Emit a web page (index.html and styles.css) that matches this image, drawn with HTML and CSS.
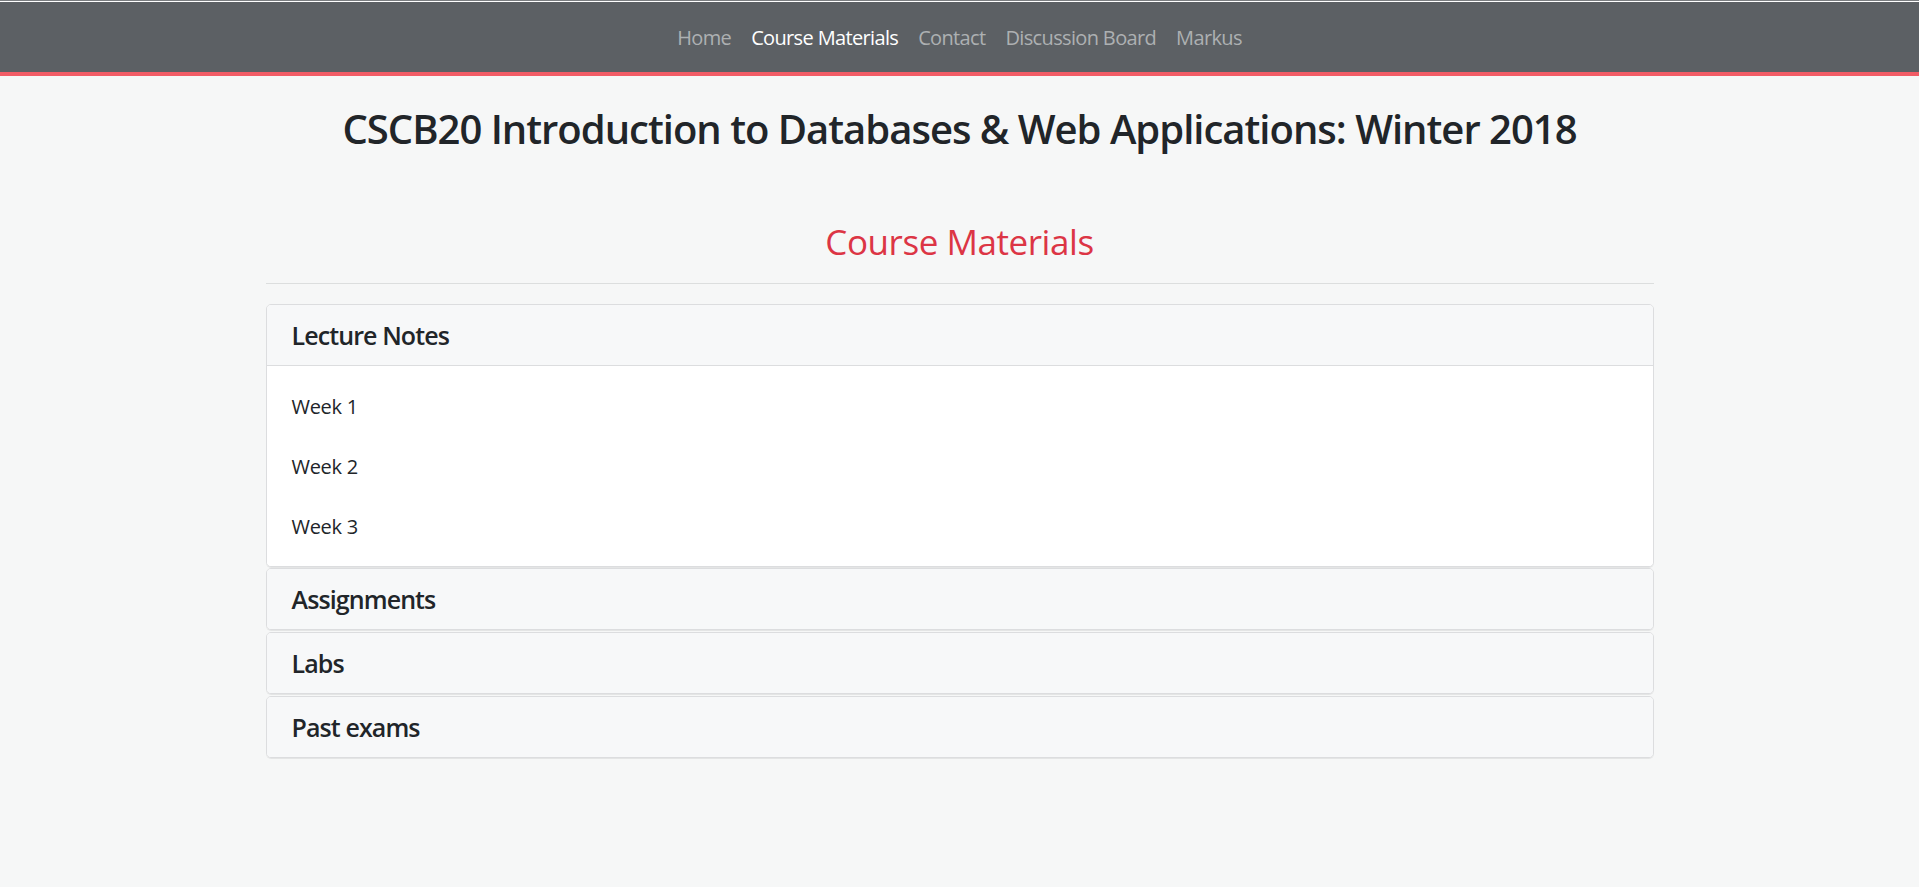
FILE: index.html
```html
<!DOCTYPE html>
<html lang="en">
<head>
<meta charset="utf-8">
<title>CSCB20 - Course Materials</title>
<link rel="stylesheet" href="styles.css">
</head>
<body>
<div class="topline"></div>
<nav class="navbar">
  <ul class="nav">
    <li><a class="nav-link" href="#">Home</a></li>
    <li><a class="nav-link active" href="#">Course Materials</a></li>
    <li><a class="nav-link" href="#">Contact</a></li>
    <li><a class="nav-link" href="#">Discussion Board</a></li>
    <li><a class="nav-link" href="#">Markus</a></li>
  </ul>
</nav>
<h1 class="site-title">CSCB20 Introduction to Databases &amp; Web Applications: Winter 2018</h1>
<main class="container">
  <h2 class="page-title">Course Materials</h2>
  <hr class="divider">
  <div class="card card-open">
    <div class="card-header open">Lecture Notes</div>
    <ul class="card-body">
      <li class="item">Week 1</li>
      <li class="item">Week 2</li>
      <li class="item">Week 3</li>
    </ul>
  </div>
  <div class="card">
    <div class="card-header">Assignments</div>
  </div>
  <div class="card">
    <div class="card-header">Labs</div>
  </div>
  <div class="card">
    <div class="card-header">Past exams</div>
  </div>
</main>
</body>
</html>
```
FILE: styles.css
```css
* { box-sizing: border-box; }
body {
  margin: 0;
  background: #f6f7f7;
  font-family: "Open Sans", "Noto Sans", sans-serif;
  color: #212529;
}
.topline {
  height: 2px;
  background: linear-gradient(#7a7d80 50%, #ffffff 50%);
}
.navbar {
  background: #5c6064;
  border-bottom: 4px solid #f25c66;
}
.nav {
  list-style: none;
  margin: 0;
  padding: 2px 0 0;
  display: flex;
  justify-content: center;
  height: 70px;
  align-items: center;
}
.nav-link {
  display: block;
  padding: 0 10px;
  font-size: 20px;
  line-height: 30px;
  letter-spacing: -0.65px;
  color: #adb0b2;
  text-decoration: none;
}
.nav-link.active { color: #ffffff; }
.site-title {
  margin: 29px 0 0;
  text-align: center;
  font-size: 40px;
  line-height: 48px;
  font-weight: 600;
  letter-spacing: -1px;
}
.container {
  width: 1388px;
  margin: 0 auto;
}
.page-title {
  margin: 68px 0 0;
  text-align: center;
  color: #dc3545;
  font-size: 35px;
  line-height: 42px;
  font-weight: 400;
  letter-spacing: -0.45px;
}
.divider {
  margin: 20px 0;
  border: 0;
  border-top: 1px solid #dcdede;
}
.card {
  border: 1px solid #dcdddf;
  border-radius: 5px;
  margin-bottom: 2px;
  box-shadow: 0 1px 0 rgba(0, 0, 0, 0.07);
  overflow: hidden;
}
.card.card-open { margin-bottom: 1px; }
.card-header {
  background: #f7f8f9;
  padding: 15px 25px;
  font-size: 25px;
  line-height: 30px;
  font-weight: 600;
  letter-spacing: -0.9px;
}
.card-header.open { border-bottom: 1px solid #dcdddf; }
.card-body {
  list-style: none;
  margin: 0;
  background: #ffffff;
  padding: 11px 0 9px;
}
.item {
  padding: 15px 25px;
  font-size: 20px;
  line-height: 30px;
  letter-spacing: -0.3px;
}
```
